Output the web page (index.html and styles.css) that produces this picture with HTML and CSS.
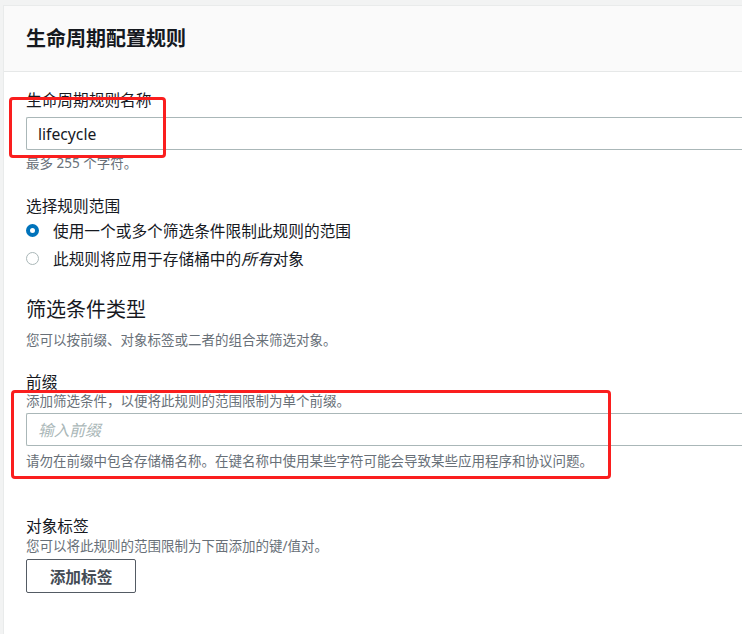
FILE: index.html
```html
<!DOCTYPE html>
<html lang="zh-CN">
<head>
<meta charset="utf-8">
<title>生命周期配置规则</title>
<link rel="stylesheet" href="styles.css">
</head>
<body>
<div class="page">
  <div class="card">
    <div class="card-header">
      <h2 class="card-title">生命周期配置规则</h2>
    </div>
    <div class="card-body">
      <div class="field field-name">
        <label class="label">生命周期规则名称</label>
        <div class="input"><span class="input-value">lifecycle</span></div>
        <div class="hint hint-after">最多 255 个字符。</div>
      </div>

      <div class="field field-scope">
        <div class="label">选择规则范围</div>
        <div class="radios">
          <div class="radio-row"><span class="radio radio-on"></span><span>使用一个或多个筛选条件限制此规则的范围</span></div>
          <div class="radio-row"><span class="radio"></span><span>此规则将应用于存储桶中的<em class="it">所有</em>对象</span></div>
        </div>
      </div>

      <div class="section">
        <h3 class="section-title">筛选条件类型</h3>
        <div class="hint section-desc">您可以按前缀、对象标签或二者的组合来筛选对象。</div>
      </div>

      <div class="field field-prefix">
        <div class="label">前缀</div>
        <div class="hint">添加筛选条件，以便将此规则的范围限制为单个前缀。</div>
        <div class="input input-prefix"><span class="placeholder">输入前缀</span></div>
        <div class="hint hint-warn">请勿在前缀中包含存储桶名称。在键名称中使用某些字符可能会导致某些应用程序和协议问题。</div>
      </div>

      <div class="field field-tags">
        <div class="label">对象标签</div>
        <div class="hint">您可以将此规则的范围限制为下面添加的键/值对。</div>
        <button class="btn" type="button">添加标签</button>
      </div>
    </div>
  </div>
  <div class="mark mark-name"></div>
  <div class="mark mark-prefix"></div>
</div>
</body>
</html>
```

FILE: styles.css
```css
html, body {
  margin: 0;
  padding: 0;
  background: #f2f3f3;
  overflow: hidden;
}
body {
  width: 742px;
  height: 634px;
  font-family: "Noto Sans", "Noto Sans CJK SC", sans-serif;
  color: #16191f;
}
.page {
  position: relative;
  box-sizing: border-box;
  padding: 5px 0 0 3px;
  height: 634px;
}
.card {
  background: #ffffff;
  border-top: 1px solid #e9ebeb;
  border-left: 1px solid #e9ebeb;
  height: 628px;
}
.card-header {
  height: 65px;
  background: #fafafa;
  border-bottom: 1px solid #e6e8e8;
  display: flex;
  align-items: center;
  padding: 0 22px;
}
.card-title {
  margin: 0;
  font-size: 20px;
  line-height: 26px;
  font-weight: 700;
  color: #16191f;
}
.card-body {
  padding: 17px 0 0 22px;
}
.label {
  display: block;
  font-size: 15.7px;
  line-height: 22px;
  color: #16191f;
}
.hint {
  font-size: 13.5px;
  line-height: 18px;
  color: #687078;
}
.input {
  box-sizing: border-box;
  height: 33px;
  border: 1px solid #aab7b8;
  border-right: none;
  border-radius: 2px 0 0 2px;
  display: flex;
  align-items: center;
  padding: 0 11px;
  margin-top: 6px;
  background: #fff;
}
.input-value {
  font-size: 15.7px;
  color: #16191f;
}
.hint-after {
  margin-top: 4px;
}
.field-scope {
  margin-top: 23px;
}
.radios {
  display: flex;
  flex-direction: column;
  gap: 2px;
}
.radio-row {
  display: flex;
  align-items: center;
  height: 26px;
  font-size: 15.7px;
  color: #16191f;
}
.radio {
  box-sizing: border-box;
  width: 13px;
  height: 13px;
  border-radius: 50%;
  border: 1.5px solid #aab7b8;
  margin: 0 14px 0 0;
  flex: none;
}
.radio-on {
  border: 4px solid #0073bb;
  background: #fff;
}
.it {
  font-style: italic;
}
.section {
  margin-top: 26px;
}
.section-title {
  margin: 0;
  font-size: 20px;
  line-height: 26px;
  font-weight: 400;
  color: #16191f;
}
.section-desc {
  margin-top: 8px;
}
.field-prefix {
  margin-top: 23px;
}
.field-prefix .label {
  line-height: 20px;
}
.input-prefix {
  margin-top: 3px;
}
.placeholder {
  font-size: 15.7px;
  font-style: italic;
  color: #aab7b8;
}
.hint-warn {
  margin-top: 6px;
}
.field-tags {
  margin-top: 46px;
}
.field-tags .label {
  line-height: 20px;
}
.field-tags .hint {
  margin-top: 1px;
}
.btn {
  margin-top: 4px;
  width: 110px;
  height: 34px;
  border: 1px solid #545b64;
  border-radius: 2px;
  background: #fff;
  font-family: "Noto Sans", "Noto Sans CJK SC", sans-serif;
  font-size: 15.7px;
  font-weight: 700;
  color: #444b54;
  padding: 0;
}
.mark {
  position: absolute;
  border: 3px solid #fa1e1e;
  border-radius: 4px;
  box-sizing: border-box;
}
.mark-name {
  left: 9px;
  top: 97px;
  width: 157px;
  height: 61px;
}
.mark-prefix {
  left: 11px;
  top: 390px;
  width: 600px;
  height: 89px;
}
```
